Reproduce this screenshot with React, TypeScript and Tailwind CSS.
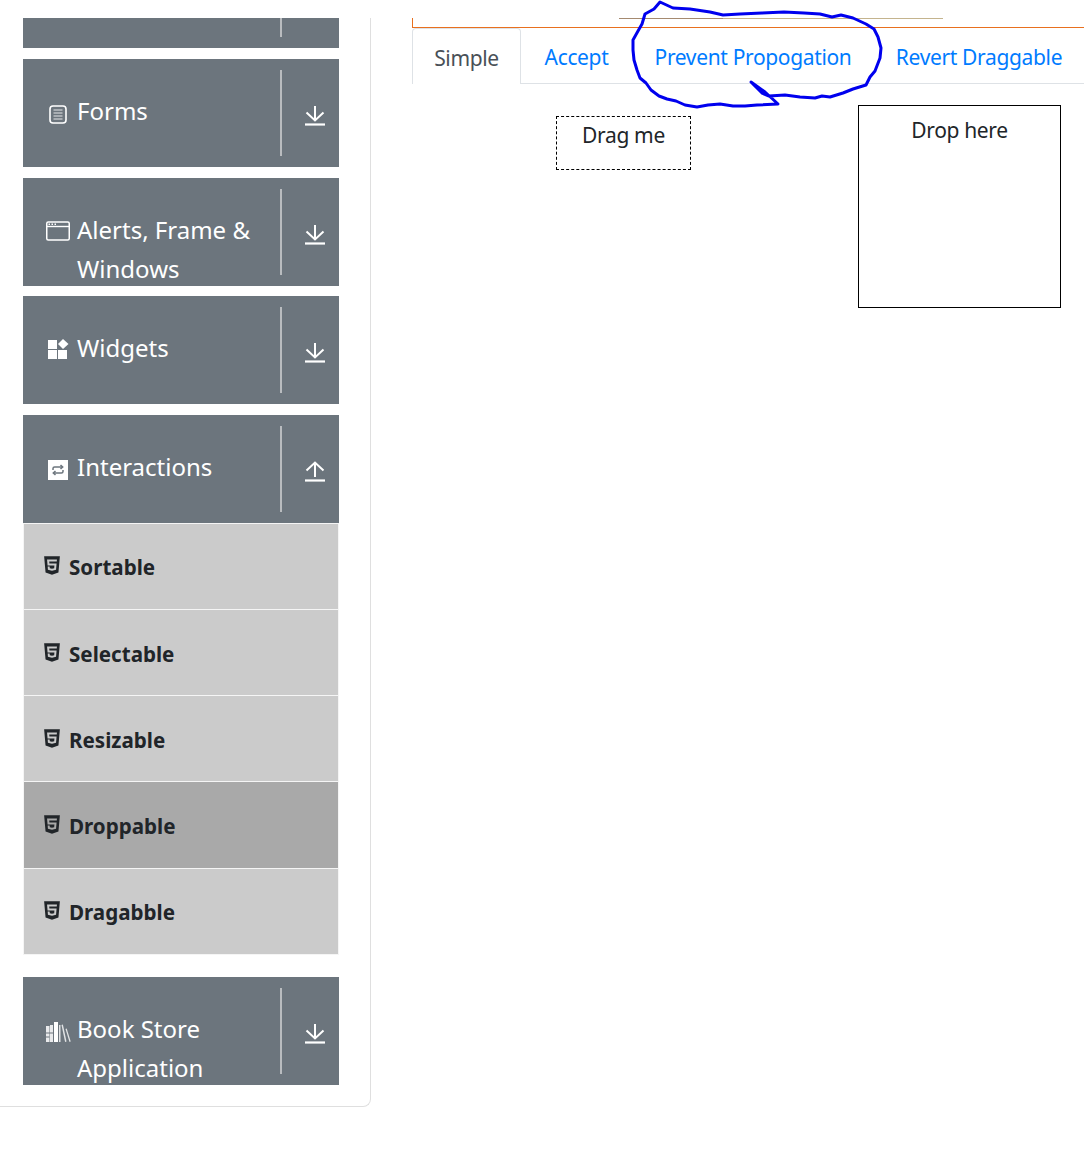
import type { ReactNode } from 'react'
import { FaHtml5 } from 'react-icons/fa'

const FONT = "font-['Noto_Sans',sans-serif]"

function ToggleArrow({ up = false }: { up?: boolean }) {
  return (
    <svg width="20" height="22" viewBox="0 0 20 22" fill="none" stroke="#fff" strokeWidth="2">
      {up ? (
        <>
          <path d="M10 17V3" />
          <path d="M1.5 10.5 10 2.5l8.5 8" />
        </>
      ) : (
        <>
          <path d="M10 2v14" />
          <path d="M1.5 8.5l8.5 8 8.5-8" />
        </>
      )}
      <path d="M0 20.5h20" strokeWidth="2.2" />
    </svg>
  )
}

function FormsIcon() {
  return (
    <svg width="18" height="19" viewBox="0 0 18 19" fill="none" stroke="#fff">
      <rect x="1" y="1" width="16" height="17" rx="3" strokeWidth="1.6" />
      <path d="M4.5 5h9M4.5 8h9M4.5 11h9M4.5 14h9" stroke="#e4e6e8" strokeWidth="1.2" />
    </svg>
  )
}

function WindowIcon() {
  return (
    <svg width="24" height="20" viewBox="0 0 24 20" fill="none" stroke="#fff">
      <rect x="0.75" y="1" width="22.5" height="18" rx="1.5" strokeWidth="1.5" />
      <path d="M1 5.5h22" strokeWidth="1.4" />
      <path d="M2.5 3.2h1.5M5.5 3.2H7M8.5 3.2H10" strokeWidth="1.4" />
    </svg>
  )
}

function WidgetsIcon() {
  return (
    <svg width="21" height="21" viewBox="0 0 21 21" fill="#fff">
      <rect x="0" y="1" width="9" height="9" />
      <rect x="0" y="11" width="9" height="9" />
      <rect x="10" y="11" width="9" height="9" />
      <path d="M15 0l5.5 5-5.5 5-5-5z" />
    </svg>
  )
}

function RepeatIcon() {
  return (
    <svg width="20" height="20" viewBox="0 0 20 20">
      <rect width="20" height="20" fill="#fff" />
      <g fill="none" stroke="#6c757d" strokeWidth="1.5">
        <path d="M5 10V8.5C5 7.5 5.7 7 6.6 7H14" />
        <path d="M12.5 5l2.2 2-2.2 2" />
        <path d="M15 10v1.5c0 1-.7 1.5-1.6 1.5H6" />
        <path d="M7.5 15l-2.2-2 2.2-2" />
      </g>
    </svg>
  )
}

function BooksIcon() {
  return (
    <svg width="25" height="20" viewBox="0 0 25 20" fill="#fff">
      <rect x="0" y="4" width="3.5" height="16" opacity="0.85" />
      <rect x="4" y="3" width="3" height="17" opacity="0.85" />
      <rect x="8" y="0" width="4" height="20" />
      <path d="M13 3h1.5v17H13z" opacity="0.8" />
      <path d="M15.5 3l1.4-.4 3.6 17-1.4.4z" opacity="0.8" />
      <path d="M19.5 7l1.2-.4 4 13-1.2.4z" opacity="0.8" />
      <path d="M0 11h7M0 15h3.5" stroke="#6c757d" strokeWidth="1" />
    </svg>
  )
}

interface GroupProps {
  icon: ReactNode
  iconOffset: number
  label: string[]
  open?: boolean
}

function Group({ icon, iconOffset, label, open = false }: GroupProps) {
  return (
    <div className="flex h-[108px] overflow-hidden bg-[#6c757d] text-white">
      <div className="flex w-[258px] pt-[32px]">
        <div
          className="flex h-[39px] w-[54px] shrink-0 items-center justify-center pl-[16px]"
          style={{ marginTop: iconOffset }}
        >
          {icon}
        </div>
        <div className="text-[24px] leading-[39px]">
          {label.map((line) => (
            <div key={line} className="whitespace-nowrap">
              {line}
            </div>
          ))}
        </div>
      </div>
      <div className="-ml-px mt-[11px] h-[86px] w-[2px] bg-[#b9bcbf]" />
      <div className="ml-[23px] mt-[45px]">
        <ToggleArrow up={open} />
      </div>
    </div>
  )
}

const subItems = ['Sortable', 'Selectable', 'Resizable', 'Droppable', 'Dragabble']

function SubMenu() {
  return (
    <ul className="border-x border-t border-[#f5f5f5]">
      {subItems.map((item) => (
        <li
          key={item}
          className={`flex h-[86.2px] items-center border-b border-[#f5f5f5] pl-[20px] text-[#212529] ${
            item === 'Droppable' ? 'bg-[#a9a9a9]' : 'bg-[#cbcbcb]'
          }`}
        >
          <FaHtml5 className="mb-[1px] mr-[9px] h-[21px] w-[16px]" />
          <span className="mt-[3px] text-[20.6px] font-bold">{item}</span>
        </li>
      ))}
    </ul>
  )
}

function Sidebar() {
  return (
    <aside className="mt-[18px] w-[371px] shrink-0 self-start rounded-br-lg border-b border-r border-[#dfdfdf] pb-[21px] pl-[23px] pr-[31px]">
      <div className="h-[30.4px] bg-[#6c757d]">
        <div className="ml-[257px] h-[19px] w-[2px] bg-[#b9bcbf]" />
      </div>
      <div className="mt-[10.6px] flex flex-col gap-[10.6px]">
        <Group icon={<FormsIcon />} iconOffset={4} label={['Forms']} />
        <Group icon={<WindowIcon />} iconOffset={2} label={['Alerts, Frame &', 'Windows']} />
        <Group icon={<WidgetsIcon />} iconOffset={2} label={['Widgets']} />
      </div>
      <div className="mt-[10.6px]">
        <Group icon={<RepeatIcon />} iconOffset={4} label={['Interactions']} open />
        <SubMenu />
      </div>
      <div className="mt-[22px]">
        <Group icon={<BooksIcon />} iconOffset={4} label={['Book Store', 'Application']} />
      </div>
    </aside>
  )
}

const tabs = [
  { name: 'Simple', width: 'w-[109px]' },
  { name: 'Accept', width: 'w-[111px]' },
  { name: 'Prevent Propogation', width: 'w-[242px]' },
  { name: 'Revert Draggable', width: 'w-[210px]' },
]

function Tabs() {
  return (
    <ul className="flex h-[56px] border-b border-[#dee2e6] text-[21px] tracking-[-0.35px]">
      {tabs.map((tab, i) => (
        <li
          key={tab.name}
          className={`${tab.width} h-[56px] text-center leading-[58px] ${
            i === 0
              ? 'rounded-t border-x border-t border-[#dee2e6] bg-white text-[#495057]'
              : 'text-[#007bff]'
          }`}
        >
          {tab.name}
        </li>
      ))}
    </ul>
  )
}

// the hand drawn circle someone put on the screenshot
function Scribble() {
  return (
    <svg className="absolute left-0 top-0" width="1084" height="120" fill="none" stroke="#0000ee" strokeWidth="3" strokeLinejoin="round">
      <path d="M660 2 L654 9 L645 14 L642 24 L638 31 L633 40 L633 50 L634 60 L637 70 L640 78 L646 83 L651 90 L659 96 L667 99 L676 101 L685 105 L697 107 L708 105 L720 104 L733 106 L745 106 L757 105 L778 104 L765 92 L751 82 L762 93 L769 96 L785 95 L800 97 L815 98 L822 96 L830 97 L843 93 L853 89 L866 85 L870 77 L875 71 L880 58 L881 48 L878 37 L874 29 L866 24 L853 18 L841 15 L832 17 L820 14 L804 13 L784 12 L762 13 L740 14 L723 15 L710 12 L690 9 L673 8 L660 2 Z" />
    </svg>
  )
}

export default function App() {
  return (
    <div className={`relative flex h-[1157px] w-[1084px] overflow-hidden bg-white ${FONT}`}>
      <Sidebar />
      <main className="ml-[41px] flex-1 pt-[18px]">
        <div className="relative h-[10px] border-b border-l border-[#e8701f]">
          <div className="absolute left-[206px] top-0 h-px w-[104px] bg-[#a58a70]" />
          <div className="absolute left-[310px] top-0 h-px w-[220px] bg-[#c4b48e]" />
        </div>
        <Tabs />
        <div className="flex items-start pt-[21px] text-[21px] tracking-[-0.35px] text-[#212529]">
          <div className="ml-[144px] mt-[11px] h-[54px] w-[135px] border border-dashed border-black text-center leading-[36px]">
            Drag me
          </div>
          <div className="ml-[167px] h-[203px] w-[203px] border border-black pt-[6px] text-center leading-[36px]">
            Drop here
          </div>
        </div>
      </main>
      <Scribble />
    </div>
  )
}
